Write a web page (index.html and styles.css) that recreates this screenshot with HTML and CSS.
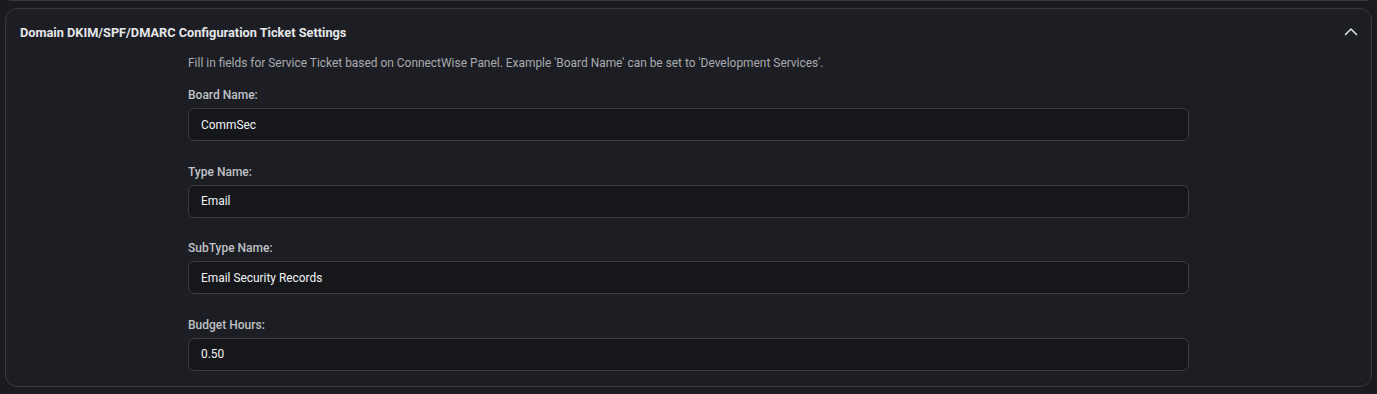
FILE: index.html
```html
<!DOCTYPE html>
<html lang="en">
<head>
  <meta charset="UTF-8" />
  <title>Ticket Settings</title>
  <link rel="stylesheet" href="styles.css">
</head>
<body>
  <div class="page">
    <div class="card card-prev"></div>

    <div class="card">
      <div class="card-header">
        <span class="card-title">Domain DKIM/SPF/DMARC Configuration Ticket Settings</span>
        <svg class="chevron" width="16" height="16" viewBox="0 0 16 16">
          <path d="M2.5 10.5 L8 5 L13.5 10.5" fill="none" stroke="#dfe3ea" stroke-width="1.5" stroke-linecap="round" stroke-linejoin="round"/>
        </svg>
      </div>

      <div class="card-body">
        <p class="hint">Fill in fields for Service Ticket based on ConnectWise Panel. Example 'Board Name' can be set to 'Development Services'.</p>

        <div class="field">
          <label for="boardName">Board Name:</label>
          <input id="boardName" type="text" value="CommSec">
        </div>

        <div class="field">
          <label for="typeName">Type Name:</label>
          <input id="typeName" type="text" value="Email">
        </div>

        <div class="field">
          <label for="subtypeName">SubType Name:</label>
          <input id="subtypeName" type="text" value="Email Security Records">
        </div>

        <div class="field">
          <label for="budgetHours">Budget Hours:</label>
          <input id="budgetHours" type="text" value="0.50">
        </div>
      </div>
    </div>
  </div>
</body>
</html>
```

FILE: styles.css
```css
body {
  font-family: Roboto, 'Liberation Sans', sans-serif;
  background: #1a1b1f;
  margin: 0;
  padding: 0;
}

.page {
  padding: 0 5px;
}

.card {
  background: #1d1e23;
  border: 1px solid #383a40;
  border-radius: 12px;
  box-sizing: border-box;
}

/* bottom edge of the section above */
.card-prev {
  height: 12px;
  margin-top: -11px;
  margin-bottom: 7px;
}

.card-header {
  display: flex;
  justify-content: space-between;
  align-items: center;
  height: 45px;
  padding: 0 12px 0 14px;
}

.card-title {
  color: #e4e6ea;
  font-size: 12.75px;
  font-weight: 700;
  padding-top: 2px;
}

.card-body {
  max-width: 1001px;
  margin: 0 auto;
  padding-bottom: 15px;
}

.hint {
  margin: 0 0 14px;
  font-size: 11.93px;
  line-height: 18px;
  color: #a8aab0;
}

.field {
  display: flex;
  flex-direction: column;
  margin-bottom: 21.67px;
}

.field:last-child {
  margin-bottom: 0;
}

.field label {
  font-size: 12px;
  line-height: 18px;
  font-weight: 500;
  color: #bfc1c6;
  margin-bottom: 4px;
}

.field input {
  height: 33px;
  box-sizing: border-box;
  background: #16171b;
  border: 1px solid #3a3c42;
  border-radius: 6px;
  padding: 0 12px;
  font-family: inherit;
  font-size: 11.9px;
  color: #f2f3f5;
  outline: none;
}
```
